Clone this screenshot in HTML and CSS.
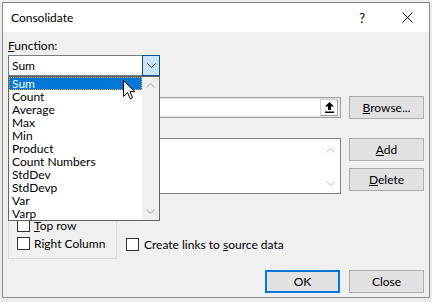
FILE: index.html
```html
<!DOCTYPE html>
<html lang="en">
<head>
    <meta charset="UTF-8">
    <title>Consolidate</title>
    <link rel="stylesheet" href="styles.css">
</head>
<body>
    <div class="window">
        <div class="titlebar">
            <span class="title">Consolidate</span>
            <span class="help">?</span>
            <svg class="close-x" width="11" height="11" viewBox="0 0 11 11">
                <path d="M0.5 0.5 L10.5 10.5 M10.5 0.5 L0.5 10.5" stroke="#000" stroke-width="1" fill="none"/>
            </svg>
        </div>

        <div class="content">
            <div class="label"><u>F</u>unction:</div>
            <div class="combo">
                <span class="combo-text">Sum</span>
                <span class="combo-btn">
                    <svg width="9" height="5" viewBox="0 0 9 5">
                        <path d="M0.5 0.5 L4.5 4.5 L8.5 0.5" stroke="#222" stroke-width="1" fill="none"/>
                    </svg>
                </span>
            </div>

            <!-- reference label sits under the open dropdown -->
            <div class="spacer-ref"></div>
            <div class="row">
                <div class="ref-input">
                    <span class="ref-btn">
                        <svg width="9" height="11" viewBox="0 0 9 11">
                            <path d="M4.5 0 L9 4.5 L6 4.5 L6 8 L3 8 L3 4.5 L0 4.5 Z" fill="#000"/>
                            <rect x="0" y="9.5" width="9" height="1.5" fill="#000"/>
                        </svg>
                    </span>
                </div>
                <button class="btn"><u>B</u>rowse...</button>
            </div>

            <div class="spacer-all"></div>
            <div class="row">
                <div class="ref-list">
                    <span class="faint-arrow up">
                        <svg width="9" height="5" viewBox="0 0 9 5"><path d="M0.5 4.5 L4.5 0.5 L8.5 4.5" stroke="#c6c6c6" fill="none"/></svg>
                    </span>
                    <span class="faint-arrow down">
                        <svg width="9" height="5" viewBox="0 0 9 5"><path d="M0.5 0.5 L4.5 4.5 L8.5 0.5" stroke="#c6c6c6" fill="none"/></svg>
                    </span>
                </div>
                <div class="btn-col">
                    <button class="btn"><u>A</u>dd</button>
                    <button class="btn"><u>D</u>elete</button>
                </div>
            </div>

            <div class="bottom">
                <div class="groupbox">
                    <label class="check"><span class="box"></span><span><u>T</u>op row</span></label>
                    <label class="check"><span class="box"></span><span>Ri<u>g</u>ht Column</span></label>
                </div>
                <label class="check check-links"><span class="box"></span><span>Create links to <u>s</u>ource data</span></label>
            </div>

            <div class="actions">
                <button class="btn btn-default">OK</button>
                <button class="btn">Close</button>
            </div>

            <!-- open dropdown of the function combo -->
            <div class="popup">
                <div class="items">
                    <div class="item selected">Sum</div>
                    <div class="item">Count</div>
                    <div class="item">Average</div>
                    <div class="item">Max</div>
                    <div class="item">Min</div>
                    <div class="item">Product</div>
                    <div class="item">Count Numbers</div>
                    <div class="item">StdDev</div>
                    <div class="item">StdDevp</div>
                    <div class="item">Var</div>
                    <div class="item">Varp</div>
                </div>
                <div class="scrollbar">
                    <svg width="9" height="5" viewBox="0 0 9 5"><path d="M0.5 4.5 L4.5 0.5 L8.5 4.5" stroke="#c2c2c2" stroke-width="1.3" fill="none"/></svg>
                    <svg width="9" height="5" viewBox="0 0 9 5"><path d="M0.5 0.5 L4.5 4.5 L8.5 0.5" stroke="#c2c2c2" stroke-width="1.3" fill="none"/></svg>
                </div>
            </div>

            <svg class="cursor" width="13" height="20" viewBox="0 0 13 20">
                <path d="M0.5 0.5 L0.5 16.5 L4.5 12.5 L7.2 18.8 L9.6 17.8 L7 11.7 L12 11.7 Z" fill="#fff" stroke="#000" stroke-width="1" stroke-linejoin="miter"/>
            </svg>
        </div>
    </div>
</body>
</html>
```

FILE: styles.css
```css
* {
    margin: 0;
    padding: 0;
    box-sizing: border-box;
}

body {
    background: #ececec;
    font-family: Lato, "Noto Sans", sans-serif;
    font-size: 12px;
    color: #000;
}

u {
    text-decoration: underline;
    text-underline-offset: 1px;
}

.window {
    width: 428px;
    height: 296px;
    margin: 2px 0 0 2px;
    border: 1px solid #8a8a8a;
    background: #f0f0f0;
    display: flex;
    flex-direction: column;
}

.titlebar {
    height: 29px;
    background: #fff;
    display: flex;
    align-items: center;
    padding-left: 8px;
}

.title {
    flex: 1;
    font-size: 12px;
}

.help {
    font-size: 13px;
    margin-right: 37px;
}

.close-x {
    margin-right: 16px;
}

.content {
    position: relative;
    flex: 1;
    padding: 0 5px;
}

.label {
    height: 14px;
    line-height: 14px;
    margin-top: 7px;
}

.spacer-ref {
    height: 20px;
}

.spacer-all {
    height: 17px;
}

.combo {
    margin-top: 2px;
    width: 152px;
    height: 21px;
    border: 1px solid #7a7a7a;
    background: #fff;
    display: flex;
    align-items: center;
}

.combo-text {
    flex: 1;
    padding-left: 3px;
}

.combo-btn {
    width: 18px;
    height: 21px;
    margin: -1px -1px -1px 0;
    border: 1px solid #005499;
    background: #cce4f7;
    display: flex;
    align-items: center;
    justify-content: center;
}

.row {
    display: flex;
    gap: 8px;
    align-items: flex-start;
}

.ref-input {
    width: 333px;
    height: 21px;
    margin-top: 1px;
    background: #fff;
    border: 1px solid #a0a0a0;
    box-shadow: inset 0 0 0 1px #e3e3e3;
    display: flex;
    justify-content: flex-end;
    align-items: center;
    padding-right: 2px;
}

.ref-btn {
    width: 18px;
    height: 17px;
    background: #fff;
    border: 1px solid #d0d0d0;
    border-right-color: #a0a0a0;
    border-bottom-color: #a0a0a0;
    display: flex;
    align-items: center;
    justify-content: center;
}

.ref-list {
    position: relative;
    width: 333px;
    height: 56px;
    margin-top: 2px;
    background: #fff;
    border: 1px solid #828282;
}

.faint-arrow {
    position: absolute;
    right: 5px;
    display: flex;
}

.faint-arrow.up {
    top: 9px;
}

.faint-arrow.down {
    bottom: 7px;
}

.btn-col {
    display: flex;
    flex-direction: column;
    gap: 7px;
    margin-top: 2px;
}

.btn {
    width: 75px;
    height: 23px;
    border: 1px solid #adadad;
    background: #e1e1e1;
    font-family: inherit;
    font-size: 12px;
    color: #000;
}

.btn-default {
    border: 2px solid #0078d7;
}

.bottom {
    display: flex;
    align-items: flex-end;
    margin-top: 9px;
}

.groupbox {
    width: 109px;
    height: 56px;
    border: 1px solid #dcdcdc;
    padding: 13px 0 0 8px;
}

.check {
    display: flex;
    align-items: center;
    gap: 4px;
    height: 17px;
    margin-bottom: 1px;
    white-space: nowrap;
}

.box {
    width: 13px;
    height: 13px;
    border: 1px solid #333;
    background: #fff;
}

.check-links {
    margin-left: 9px;
    margin-bottom: 6px;
    gap: 5px;
}

.actions {
    display: flex;
    justify-content: flex-end;
    gap: 9px;
    margin-top: 11px;
}

.popup {
    position: absolute;
    left: 5px;
    top: 44px;
    width: 152px;
    height: 145px;
    border: 1px solid #646464;
    background: #fff;
    display: flex;
}

.items {
    flex: 1;
}

.item {
    height: 13px;
    line-height: 13px;
    padding-left: 3px;
}

.item.selected {
    background: #0078d7;
    color: #fff;
    outline: 1px dotted #f0a040;
    outline-offset: -1px;
}

.scrollbar {
    width: 17px;
    background: #f0f0f0;
    display: flex;
    flex-direction: column;
    justify-content: space-between;
    align-items: center;
    padding: 6px 0 6px;
}

.cursor {
    position: absolute;
    left: 120px;
    top: 48px;
}
```
